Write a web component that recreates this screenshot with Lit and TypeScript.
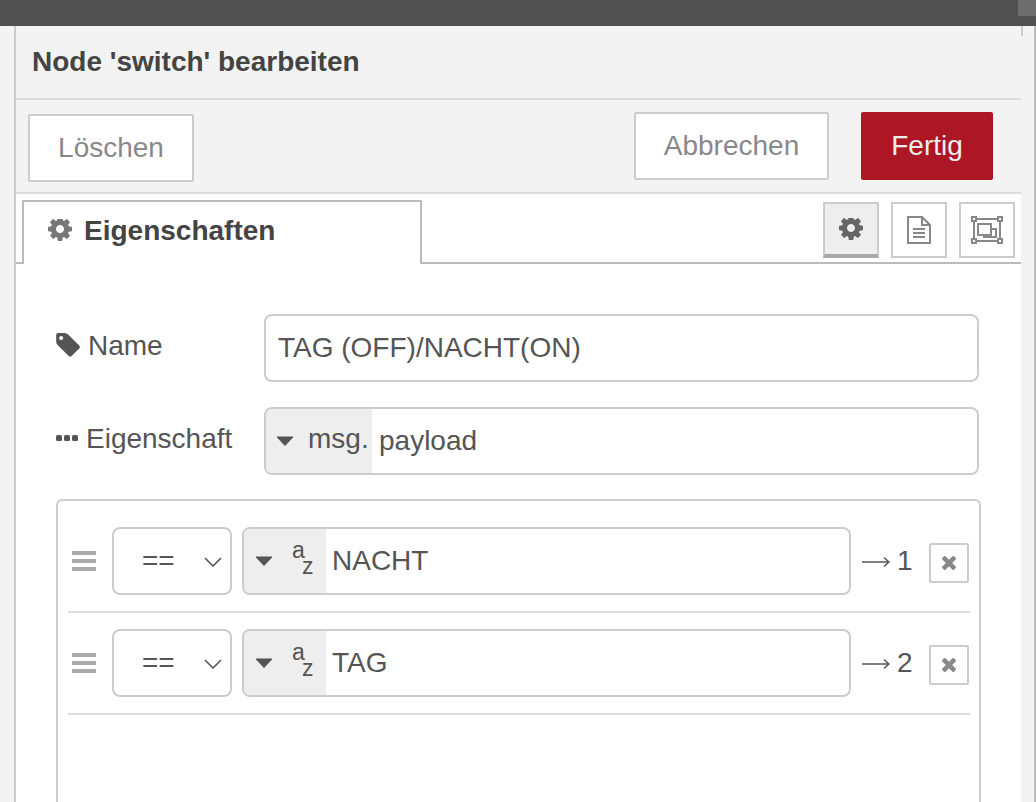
import { LitElement, html, css, svg } from "lit";
import { customElement } from "lit/decorators.js";

const COG = "M1024 640q0-106-75-181t-181-75-181 75-75 181 75 181 181 75 181-75 75-181zm512-109v222q0 12-8 23t-20 13l-185 28q-19 54-39 91 35 50 107 138 10 12 10 25t-9 23q-27 37-99 108t-94 71q-12 0-26-9l-138-108q-44 23-91 38-16 136-29 186-7 28-36 28h-222q-14 0-24.5-8.5t-11.5-21.5l-28-184q-49-16-90-37l-141 107q-10 9-25 9-14 0-25-11-126-114-165-168-7-10-7-23 0-12 8-23 15-21 51-66.5t54-70.5q-27-50-41-99l-183-27q-13-2-21-12.5t-8-23.5v-222q0-12 8-23t19-13l186-28q14-46 39-92-40-57-107-138-10-12-10-24 0-10 9-23 26-36 98.5-107.5t94.5-71.5q13 0 26 10l138 107q44-23 91-38 16-136 29-186 7-28 36-28h222q14 0 24.5 8.5t11.5 21.5l28 184q49 16 90 37l142-107q9-9 24-9 13 0 25 10 129 119 165 170 7 8 7 22 0 12-8 23-15 21-51 66.5t-54 70.5q26 50 41 98l183 28q13 2 21 12.5t8 23.5z";
const TAG = "M448 320q0-53-37.5-90.5t-90.5-37.5-90.5 37.5-37.5 90.5 37.5 90.5 90.5 37.5 90.5-37.5 37.5-90.5zm1067 576q0 53-37 90l-491 492q-39 37-91 37-53 0-90-37l-715-716q-38-37-64.5-101t-26.5-117v-416q0-52 38-90t90-38h416q53 0 117 26.5t102 64.5l715 714q37 39 37 91z";
const TIMES = "M1298 1014q0 40-28 68l-136 136q-28 28-68 28t-68-28l-294-294-294 294q-28 28-68 28t-68-28l-136-136q-28-28-28-68t28-68l294-294-294-294q-28-28-28-68t28-68l136-136q28-28 68-28t68 28l294 294 294-294q28-28 68-28t68 28l136 136q28 28 28 68t-28 68l-294 294 294 294q28 28 28 68z";

const cog = (cls: string) => html`<svg class=${cls} viewBox="0 0 1536 1536" fill="currentColor"><path d=${COG}></path></svg>`;
const caret = html`<svg class="caret" viewBox="0 0 18 10"><path d="M1 1h16L9 9.500z" fill="#555" stroke="#555" stroke-width="1" stroke-linejoin="round"></path></svg>`;

@customElement("app-root")
export class AppRoot extends LitElement {
  static styles = css`
    :host {
      display: block;
      width: 1036px;
      height: 802px;
      overflow: hidden;
      font-family: "Liberation Sans", Arial, sans-serif;
      color: #555;
      background: #f3f3f3;
    }
    .topbar { height: 26px; background: #515151; display: flex; justify-content: flex-end; }
    .corner { width: 18px; height: 16px; background: #6e6e6e; }
    .body { display: flex; height: 776px; overflow: hidden; }
    .gutter-left { width: 14px; flex: none; background: #f3f3f3; border-right: 2px solid #ccc; }
    .panel { width: 1005px; flex: none; background: #fff; display: flex; flex-direction: column; }
    .panel > * { flex: none; }
    .gutter-right { width: 13px; flex: none; background: #f3f3f3; position: relative; }
    .gutter-right::before { content: ""; position: absolute; left: 0; top: 0; width: 2px; height: 10px; background: #ccc; }
    .edge { width: 2px; flex: none; background: #bbb; }

    .title {
      height: 72px; background: #f3f3f3; border-bottom: 2px solid #ddd;
      display: flex; align-items: center; padding-left: 16px;
      font-size: 28px; font-weight: 700; color: #444;
    }
    .tray {
      height: 80px; background: #f3f3f3; border-bottom: 2px solid #ddd;
      display: flex; align-items: flex-start; padding: 12px 28px 0 12px;
    }
    .btn {
      box-sizing: border-box; height: 68px; display: flex; align-items: center; justify-content: center;
      font-size: 28px; color: #888; background: #fff; border: 2px solid #ccc; border-radius: 2px;
    }
    .delete { width: 166px; margin-top: 2px; }
    .cancel { width: 195px; margin-left: auto; }
    .done { width: 132px; margin-left: 32px; background: #ad1625; border-color: #ad1625; color: #eee; }

    .tabs { height: 68px; border-bottom: 2px solid #bbb; display: flex; justify-content: space-between; align-items: flex-start; padding-left: 6px; padding-right: 6px; }
    .tab {
      box-sizing: border-box; width: 400px; height: 64px; margin-top: 6px;
      background: #fff; border: 2px solid #bbb; border-bottom: 0; border-radius: 2px 2px 0 0;
      display: flex; align-items: flex-start; padding: 14px 0 0 24px; gap: 12px;
      font-size: 28px; font-weight: 700; color: #444; position: relative; z-index: 1;
    }
    .tab-cog { width: 24px; height: 24px; color: #777; margin-top: 3px; }
    .tab-text { line-height: 30px; }
    .side { display: flex; gap: 12px; padding-top: 8px; }
    .side-btn {
      box-sizing: border-box; width: 56px; height: 56px; border: 2px solid #ccc; background: #fff;
      display: flex; align-items: center; justify-content: center; color: #888;
    }
    .side-btn.on { background: #eee; color: #666; border-bottom: 4px solid #aaa; padding-top: 2px; }
    .side-cog { width: 24px; height: 24px; }
    .side-btn svg.doc { width: 26px; height: 30px; }
    .side-btn svg.frame { width: 32px; height: 28px; }

    .form { padding: 50px 0 0 40px; }
    .field { display: flex; align-items: flex-start; height: 68px; }
    .field + .field { margin-top: 25px; }
    .label { width: 208px; flex: none; font-size: 28px; display: flex; align-items: center; height: 64px; }
    .tag-ico { width: 24px; height: 24px; margin-right: 8px; color: #555; margin-top: -2px; }
    .dots-ico { width: 24px; height: 8px; margin-right: 6px; margin-top: -2px; }
    .input {
      box-sizing: border-box; width: 715px; height: 68px; border: 2px solid #ccc; border-radius: 8px;
      display: flex; align-items: center; font-size: 28px; background: #fff; overflow: hidden;
    }
    .plain { padding-left: 12px; }
    .typed-left {
      height: 100%; background: #eee; display: flex; align-items: center; flex: none; box-sizing: border-box;
    }
    .msg { width: 106px; padding-left: 10px; }
    .msg .caret { margin-right: 14px; }
    .msg-text { position: relative; top: -2px; }
    .msg-val { padding-left: 7px; }
    .caret { width: 18px; height: 10px; flex: none; }

    .list {
      margin-top: 24px; box-sizing: border-box; width: 925px; height: 340px;
      border: 2px solid #ccc; border-radius: 6px; padding: 26px 9px 0 10px;
    }
    .rule {
      display: flex; align-items: flex-start; height: 68px; padding-bottom: 16px;
      border-bottom: 2px solid #ddd; margin-bottom: 16px; padding-left: 4px;
    }
    .handle { width: 24px; flex: none; height: 20px; margin-top: 24px; display: flex; flex-direction: column; gap: 4px; }
    .handle i { display: block; height: 4px; background: #aaa; }
    .select {
      box-sizing: border-box; width: 120px; height: 68px; margin-left: 16px; flex: none;
      border: 2px solid #ccc; border-radius: 8px; display: flex; align-items: center;
      font-size: 28px; padding-left: 28px; position: relative;
    }
    .chev { position: absolute; right: 8px; top: 28px; width: 18px; height: 10px; }
    .typed { width: 609px; margin-left: 10px; flex: none; }
    .str { width: 82px; padding-left: 11px; }
    .str .caret { margin-right: 19px; }
    .az { position: relative; width: 22px; height: 40px; font-size: 23px; flex: none; }
    .az span { position: absolute; line-height: 20px; }
    .az .a { left: 0; top: -1px; }
    .az .z { left: 10px; top: 15px; }
    .val { padding-left: 6px; }
    .out { font-size: 28px; margin-left: 11px; display: flex; align-items: center; height: 68px; gap: 7px; white-space: nowrap; }
    .arrow { width: 28px; height: 12px; margin-top: 1px; }
    .del {
      box-sizing: border-box; width: 40px; height: 40px; margin: 16px 1px 0 auto; flex: none;
      border: 2px solid #ccc; border-radius: 2px; display: flex; align-items: center; justify-content: center; color: #888;
    }
    .del svg { width: 14px; height: 14px; }
  `;

  private rule(value: string, n: number) {
    return html`
      <div class="rule">
        <div class="handle"><i></i><i></i><i></i></div>
        <div class="select">
          <span>==</span>
          <svg class="chev" viewBox="0 0 18 10" fill="none" stroke="#555" stroke-width="1.600"><path d="M1 1l8 8 8-8"></path></svg>
        </div>
        <div class="input typed">
          <div class="typed-left str">
            ${caret}
            <div class="az"><span class="a">a</span><span class="z">z</span></div>
          </div>
          <span class="val">${value}</span>
        </div>
        <div class="out">
          <svg class="arrow" viewBox="0 0 28 12" fill="none" stroke="#555" stroke-width="1.500"><path d="M0 6h27M22 1.500l5 4.500-5 4.500"></path></svg>
          <span>${n}</span>
        </div>
        <div class="del"><svg viewBox="110 58 1188 1188" fill="currentColor"><path d=${TIMES}></path></svg></div>
      </div>
    `;
  }

  render() {
    return html`
      <div class="topbar"><div class="corner"></div></div>
      <div class="body">
        <div class="gutter-left"></div>
        <div class="panel">
          <div class="title">Node 'switch' bearbeiten</div>
          <div class="tray">
            <div class="btn delete">Löschen</div>
            <div class="btn cancel">Abbrechen</div>
            <div class="btn done">Fertig</div>
          </div>
          <div class="tabs">
            <div class="tab">${cog("tab-cog")}<span class="tab-text">Eigenschaften</span></div>
            <div class="side">
              <div class="side-btn on">${cog("side-cog")}</div>
              <div class="side-btn">
                <svg class="doc" viewBox="0 0 26 30" fill="none" stroke="currentColor" stroke-width="2">
                  <path d="M2 2h14l8 8v18H2zM16 2v8h8"></path>
                  <path d="M7 14h12M7 18h12M7 22h12" stroke-width="1.800"></path>
                </svg>
              </div>
              <div class="side-btn">
                <svg class="frame" viewBox="0 0 32 28" fill="none" stroke="currentColor" stroke-width="2">
                  ${svg`
                    <path d="M5 3h22M5 25h22M3 5v18M29 5v18"></path>
                    <rect x="1" y="1" width="4" height="4"></rect>
                    <rect x="27" y="1" width="4" height="4"></rect>
                    <rect x="1" y="23" width="4" height="4"></rect>
                    <rect x="27" y="23" width="4" height="4"></rect>
                    <rect x="7" y="8" width="13" height="11"></rect>
                    <path d="M20 13h5v8H13v-2"></path>
                  `}
                </svg>
              </div>
            </div>
          </div>
          <div class="form">
            <div class="field">
              <div class="label">
                <svg class="tag-ico" viewBox="0 0 1515 1536" fill="currentColor"><path d=${TAG}></path></svg>
                <span>Name</span>
              </div>
              <div class="input plain">TAG (OFF)/NACHT(ON)</div>
            </div>
            <div class="field">
              <div class="label">
                <svg class="dots-ico" viewBox="0 0 24 8" fill="#555"><rect x="0" y="1" width="6" height="6" rx="1.500"></rect><rect x="8" y="1" width="6" height="6" rx="1.500"></rect><rect x="16" y="1" width="6" height="6" rx="1.500"></rect></svg>
                <span>Eigenschaft</span>
              </div>
              <div class="input">
                <div class="typed-left msg">${caret}<span class="msg-text">msg.</span></div>
                <span class="msg-val">payload</span>
              </div>
            </div>
            <div class="list">
              ${this.rule("NACHT", 1)}
              ${this.rule("TAG", 2)}
            </div>
          </div>
        </div>
        <div class="gutter-right"></div>
        <div class="edge"></div>
      </div>
    `;
  }
}
